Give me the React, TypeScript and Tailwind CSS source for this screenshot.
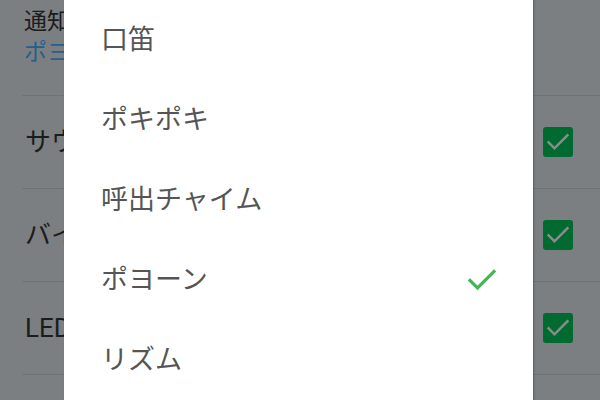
import React from "react";

const rows = ["サウンド", "バイブレーション", "LEDランプ"];
const tones = ["口笛", "ポキポキ", "呼出チャイム", "ポヨーン", "リズム"];
const selected = "ポヨーン";

function Check({ className }: { className: string }) {
  return (
    <svg viewBox="0 0 28 22" className={className} fill="none">
      <path d="M2 11.5 L9.5 19 L26 2.5" stroke="currentColor" strokeWidth="3.2" strokeLinecap="square" />
    </svg>
  );
}

export default function App() {
  return (
    <div
      className="relative w-[600px] h-[400px] overflow-hidden bg-[#7b7f81]"
      style={{ fontFamily: "Roboto, 'Noto Sans CJK JP', sans-serif" }}
    >
      {/* dimmed settings page */}
      <div className="flex flex-col">
        <div className="h-[95px] pl-6 pt-[6px] flex flex-col">
          <span className="text-[23px] leading-[31px] text-[#1c1c1c]">通知音</span>
          <span className="text-[23px] leading-[32px] text-[#21608f]">ポヨーン</span>
        </div>
        {rows.map((r) => (
          <div key={r} className="ml-[22px] h-[93px] border-t border-[#6f7375] flex items-center justify-between pl-[3px] pr-[27px]">
            <span className="text-[26px] text-[#1c1c1c]">{r}</span>
            <div className="w-[30px] h-[30px] rounded-[3px] bg-[#006a30] flex items-center justify-center">
              <Check className="w-[22px] h-[18px] text-[#8a8c8c]" />
            </div>
          </div>
        ))}
        <div className="ml-[22px] border-t border-[#6f7375]" />
      </div>

      {/* dialog */}
      <div className="absolute left-[64px] top-0 w-[469px] h-[400px] bg-white shadow-[1px_0_2px_rgba(0,0,0,0.25)] flex flex-col">
        {tones.map((t) => (
          <div key={t} className="h-[80px] shrink-0 flex items-center justify-between pl-[37px] pr-[37px]">
            <span className="text-[27px] text-[#555555]">{t}</span>
            {t === selected && <Check className="w-[28px] h-[22px] text-[#45b556]" />}
          </div>
        ))}
      </div>
    </div>
  );
}
